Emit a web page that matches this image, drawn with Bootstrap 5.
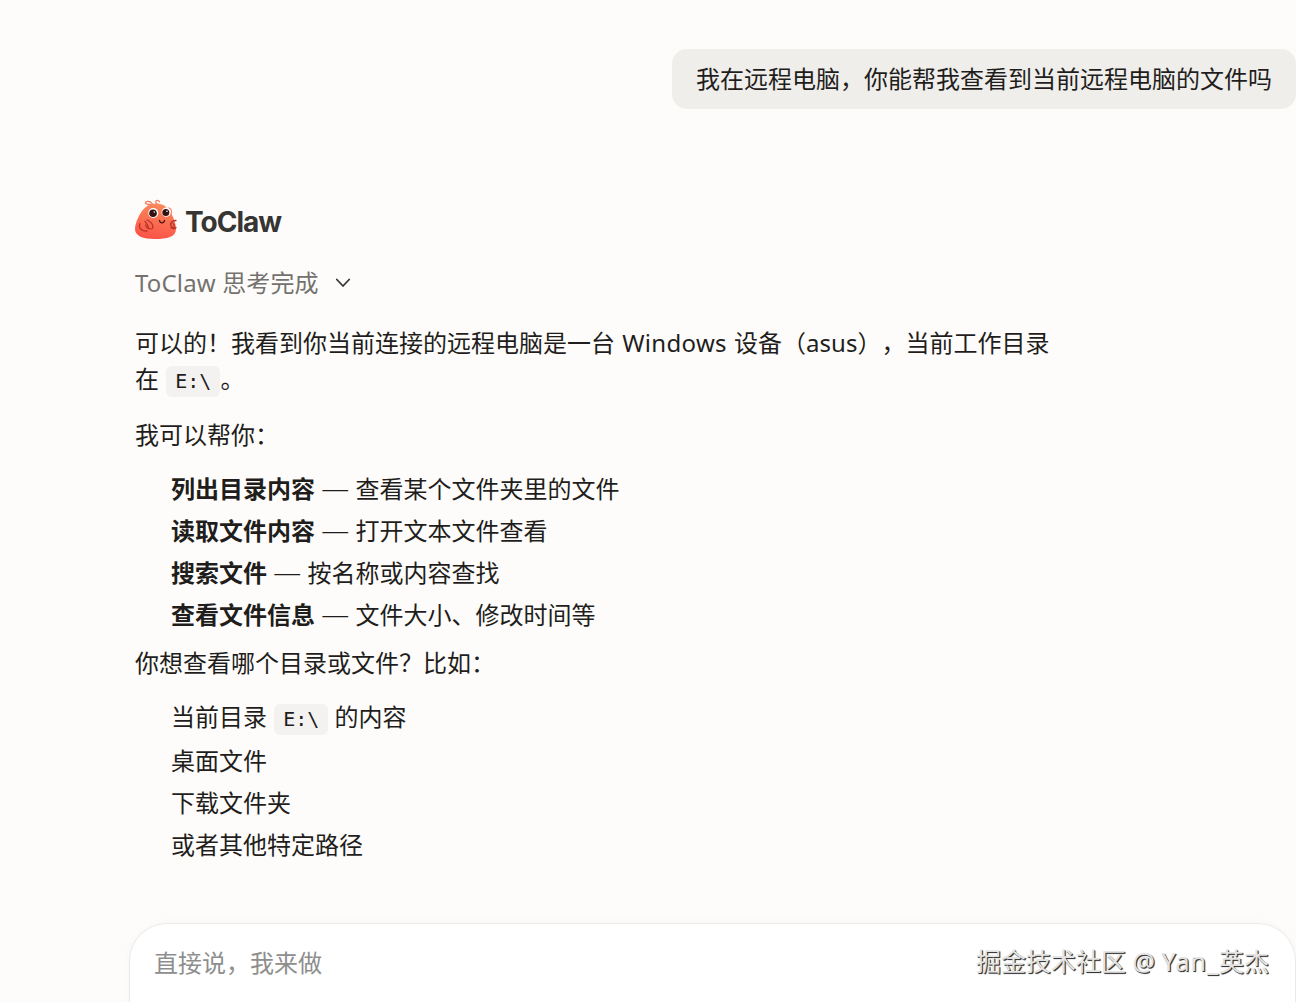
<!DOCTYPE html>
<html lang="zh-CN">
<head>
    <meta charset="UTF-8">
    <meta name="viewport" content="width=device-width, initial-scale=1.0">
    <title>ToClaw</title>
    <!-- Bootstrap CSS -->
    <link href="https://cdn.jsdelivr.net/npm/bootstrap@5.3.0/dist/css/bootstrap.min.css" rel="stylesheet">
    <style>
        body {
            background: #fdfcfa;
            color: #1f1e1c;
            font-family: "Noto Sans", "Noto Sans CJK SC", sans-serif;
            font-size: 24px;
            line-height: 36px;
            text-spacing-trim: space-all;
        }
        .chat-page { height: 1002px; }
        .user-bubble {
            margin-top: 49px;
            padding: 12px 24px 12px 24px;
            background: #f0eeeb;
            border-radius: 15px;
        }
        .bot-reply { margin: 90px 0 0 135px; width: 930px; }
        .bot-name {
            padding-top: 4px;
            font-family: Inter, sans-serif;
            font-size: 28px;
            font-weight: 650;
            letter-spacing: -1px;
            color: #363533;
        }
        .think-row { margin-top: 24px; color: #74726f; letter-spacing: .15px; }
        .answer { margin-top: 24px; }
        .answer p { margin-bottom: 18px; }
        .answer p.intro { margin-bottom: 20px; }
        .answer ul { padding-left: 36px; margin-bottom: 12px; }
        .answer li { margin-bottom: 6px; }
        .answer li.with-code { margin-bottom: 8px; }
        .answer code {
            display: inline-block;
            padding: 0 9px;
            margin: -5px 0 -5px 1px;
            height: 31px;
            line-height: 31px;
            vertical-align: 0;
            font-family: "DejaVu Sans Mono", monospace;
            font-size: 20px;
            color: #1f1e1c;
            background: #f3f2f0;
            border-radius: 6px;
        }
        .latin { letter-spacing: .3px; margin: 0 1px; }
        .dash { font-size: 28px; font-weight: 300; line-height: 1; }
        .composer {
            margin-left: 129px;
            height: 79px;
            padding: 21px 24px 0;
            background: #fff;
            border: 1px solid #ebeae8;
            border-bottom: 0;
            border-radius: 38px 38px 0 0;
            box-shadow: 0 0 8px rgba(0, 0, 0, .03);
            color: #8e8e8e;
        }
        .watermark {
            right: 27px;
            bottom: 23px;
            font-size: 25px;
            color: #e4e4e4;
            text-shadow: 1px 1px 1px #333, 1px 1px 0 #666;
        }
        .watermark span { letter-spacing: 1px; }
    </style>
</head>
<body>
    <div class="chat-page d-flex flex-column position-relative overflow-hidden">
        <!-- User message -->
        <div class="d-flex justify-content-end">
            <div class="user-bubble text-nowrap">我在远程电脑，你能帮我查看到当前远程电脑的文件吗</div>
        </div>

        <!-- Assistant reply -->
        <div class="bot-reply">
            <div class="d-flex align-items-center">
                <svg width="42" height="42" viewBox="0 0 42 42" fill="none" stroke-linecap="round" stroke-linejoin="round">
                    <defs>
                        <linearGradient id="crab" x1="0.6" y1="0" x2="0.4" y2="1">
                            <stop offset="0" stop-color="#fa8a5c"/>
                            <stop offset="1" stop-color="#fb5348"/>
                        </linearGradient>
                    </defs>
                    <path d="M17 5.5C13 5.5 9.5 5 10.5 3.5S15 1.5 17.5 5M22 5C18.5 1.5 23.5 0 24.5 3" stroke="#ee7958" stroke-width="1.2"/>
                    <path d="M21 4.5C12.5 4.5 7.5 10 4 17C1.5 22 0 26 0 30C0 37 8 40 20 40S41 38 41 30C41 26 39.5 21 37.5 17C34 10 30 4.5 21 4.5Z" fill="url(#crab)"/>
                    <path d="M32 9.5C35.5 8 37.5 11.5 36 15.5" stroke="#fa8064" stroke-width="1.2"/>
                    <path d="M5 24.5C3 29.5 7 32.5 12 32M10 22.5C12 24.5 13 26.5 13.5 28.5M10.5 26C11.5 28.5 14 30.5 17.5 29.5C19 26.5 16 22.5 12 21M41 21.5C36 21.5 34 25.5 37 28C39 29.5 41 27.5 38 24.5M36 28.5C38 30.5 41 29.5 41 28.5" stroke="#b93429" stroke-width="1.3"/>
                    <circle cx="18.3" cy="14" r="5" fill="#fff"/>
                    <circle cx="31.2" cy="13.2" r="4.6" fill="#fff"/>
                    <circle cx="18" cy="14.2" r="3.8" fill="#32110e"/>
                    <circle cx="30.8" cy="13.4" r="3.5" fill="#32110e"/>
                    <circle cx="19.3" cy="13" r=".8" fill="#fff"/>
                    <circle cx="32" cy="12.2" r=".8" fill="#fff"/>
                    <path d="M24.5 21.5C25 24.5 29 24.5 29.5 21.5" stroke="#5b1710" stroke-width="1.4"/>
                </svg>
                <span class="bot-name ms-2">ToClaw</span>
            </div>

            <div class="think-row d-flex align-items-center">
                <span>ToClaw 思考完成</span>
                <svg class="ms-3" width="16" height="16" viewBox="0 0 16 16" fill="none" stroke="#363533" stroke-width="1.8" stroke-linecap="round" stroke-linejoin="round">
                    <path d="M1.8 4.5L8 11L14.2 4.5"/>
                </svg>
            </div>

            <div class="answer">
                <p class="intro">可以的！我看到你当前连接的远程电脑是一台 <span class="latin">Windows</span> 设备（asus），当前工作目录<br>在 <code>E:\</code>。</p>
                <p>我可以帮你：</p>
                <ul class="list-unstyled">
                    <li><strong>列出目录内容</strong> <span class="dash">—</span> 查看某个文件夹里的文件</li>
                    <li><strong>读取文件内容</strong> <span class="dash">—</span> 打开文本文件查看</li>
                    <li><strong>搜索文件</strong> <span class="dash">—</span> 按名称或内容查找</li>
                    <li class="mb-0"><strong>查看文件信息</strong> <span class="dash">—</span> 文件大小、修改时间等</li>
                </ul>
                <p>你想查看哪个目录或文件？比如：</p>
                <ul class="list-unstyled mb-0">
                    <li class="with-code">当前目录 <code>E:\</code> 的内容</li>
                    <li>桌面文件</li>
                    <li>下载文件夹</li>
                    <li class="mb-0">或者其他特定路径</li>
                </ul>
            </div>
        </div>

        <!-- Input box -->
        <div class="composer mt-auto">直接说，我来做</div>
        <div class="watermark position-absolute text-nowrap">掘金技术社区 @ <span>Yan_</span>英杰</div>
    </div>

    <script src="https://cdn.jsdelivr.net/npm/bootstrap@5.3.0/dist/js/bootstrap.bundle.min.js"></script>
</body>
</html>
